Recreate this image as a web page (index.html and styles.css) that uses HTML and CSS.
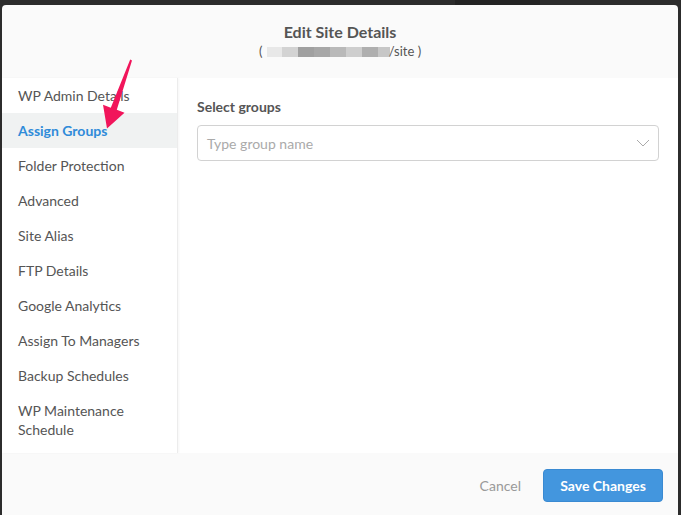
FILE: index.html
```html
<!DOCTYPE html>
<html lang="en">
<head>
    <meta charset="UTF-8">
    <title>Edit Site Details</title>
    <link rel="stylesheet" href="styles.css">
</head>
<body>
    <div class="top-strip"></div>
    <div class="modal">
        <div class="modal-header">
            <div class="title">Edit Site Details</div>
            <div class="subtitle">
                (
                <span class="blur">
                    <i class="b1"></i><i class="b2"></i><i class="b3"></i><i class="b4"></i><i class="b5"></i><i class="b6"></i><i class="b7"></i><i class="b8"></i>
                </span>/site )
            </div>
        </div>
        <div class="modal-body">
            <ul class="side-menu">
                <li>WP Admin Details</li>
                <li class="active">Assign Groups</li>
                <li>Folder Protection</li>
                <li>Advanced</li>
                <li>Site Alias</li>
                <li>FTP Details</li>
                <li>Google Analytics</li>
                <li>Assign To Managers</li>
                <li>Backup Schedules</li>
                <li>WP Maintenance Schedule</li>
            </ul>
            <div class="content">
                <label class="field-label">Select groups</label>
                <div class="select">
                    <span class="placeholder">Type group name</span>
                    <svg class="chevron" width="14" height="8" viewBox="0 0 14 8">
                        <path d="M1 1 L7 7 L13 1" fill="none" stroke="#aaa" stroke-width="1"/>
                    </svg>
                </div>
            </div>
        </div>
        <div class="modal-footer">
            <button class="btn-cancel">Cancel</button>
            <button class="btn-save">Save Changes</button>
        </div>

        <svg class="pointer" width="40" height="80" viewBox="100 56 40 80">
            <polygon points="130.2,59.6 132,60.4 116.8,109.8 124.5,112.8 107,128.5 103,104.8 110.8,107.8" fill="#f1155b"/>
        </svg>
    </div>
</body>
</html>
```

FILE: styles.css
```css
body {
    margin: 0;
    background: #2c2c2c;
    font-family: Lato, "Open Sans", sans-serif;
    overflow: hidden;
    height: 515px;
}

.top-strip {
    position: absolute;
    left: 455px;
    top: 0;
    width: 85px;
    height: 5px;
    background: #232323;
}

.modal {
    position: relative;
    margin: 5px 3px 0 2px;
    background: #fafafa;
    border-radius: 4px 4px 0 0;
    height: 520px;
}

.modal-header {
    height: 73px;
    box-sizing: border-box;
    padding-top: 18px;
    text-align: center;
    color: #555;
}

.title {
    font-size: 16px;
    font-weight: bold;
    line-height: 18px;
}

.subtitle {
    font-size: 13px;
    line-height: 18px;
    margin-top: 1px;
}

.blur {
    display: inline-flex;
    vertical-align: -1px;
    margin: 0 -1px 0 1px;
}

.blur i {
    display: block;
    width: 16px;
    height: 10px;
}

.blur .b1 { background: #e8e8e8; width: 15px; }
.blur .b2 { background: #d3d3d3; }
.blur .b3 { background: #a0a0a0; }
.blur .b4 { background: #a7a7a7; }
.blur .b5 { background: #b9b9b9; }
.blur .b6 { background: #cecece; }
.blur .b7 { background: #afafaf; }
.blur .b8 { background: #c7c7c7; width: 12px; }

.modal-body {
    display: flex;
    background: #fff;
    height: 375px;
}

.side-menu {
    list-style: none;
    margin: 0;
    padding: 0;
    width: 175px;
    border-right: 1px solid #ececec;
    box-shadow: 1px 0 2px rgba(0,0,0,0.04);
}

.side-menu li {
    padding: 8px 30px 8px 16px;
    font-size: 14px;
    line-height: 19px;
    color: #555;
}

.side-menu li.active {
    background: #f0f2f2;
    color: #2f8bd9;
    font-weight: bold;
}

.content {
    flex: 1;
    padding: 20px 19px 0 19px;
}

.field-label {
    display: block;
    font-size: 14px;
    font-weight: bold;
    line-height: 18px;
    color: #555;
    margin-bottom: 9px;
}

.select {
    display: flex;
    align-items: center;
    justify-content: space-between;
    height: 36px;
    box-sizing: border-box;
    border: 1px solid #d2d2d2;
    border-radius: 4px;
    padding: 0 8px 0 9px;
}

.placeholder {
    font-size: 14px;
    color: #aaa;
}

.modal-footer {
    display: flex;
    justify-content: flex-end;
    align-items: flex-start;
    padding: 16px 15px 0 0;
    gap: 22px;
}

.btn-cancel {
    border: none;
    background: none;
    font-family: inherit;
    font-size: 14px;
    color: #999;
    height: 32px;
    padding: 0;
}

.btn-save {
    border: 1px solid #3a8ad2;
    background: #4396de;
    color: #fff;
    font-family: inherit;
    font-size: 14px;
    font-weight: bold;
    height: 33px;
    width: 120px;
    border-radius: 4px;
}

.pointer {
    position: absolute;
    left: 98px;
    top: 51px;
}
```
